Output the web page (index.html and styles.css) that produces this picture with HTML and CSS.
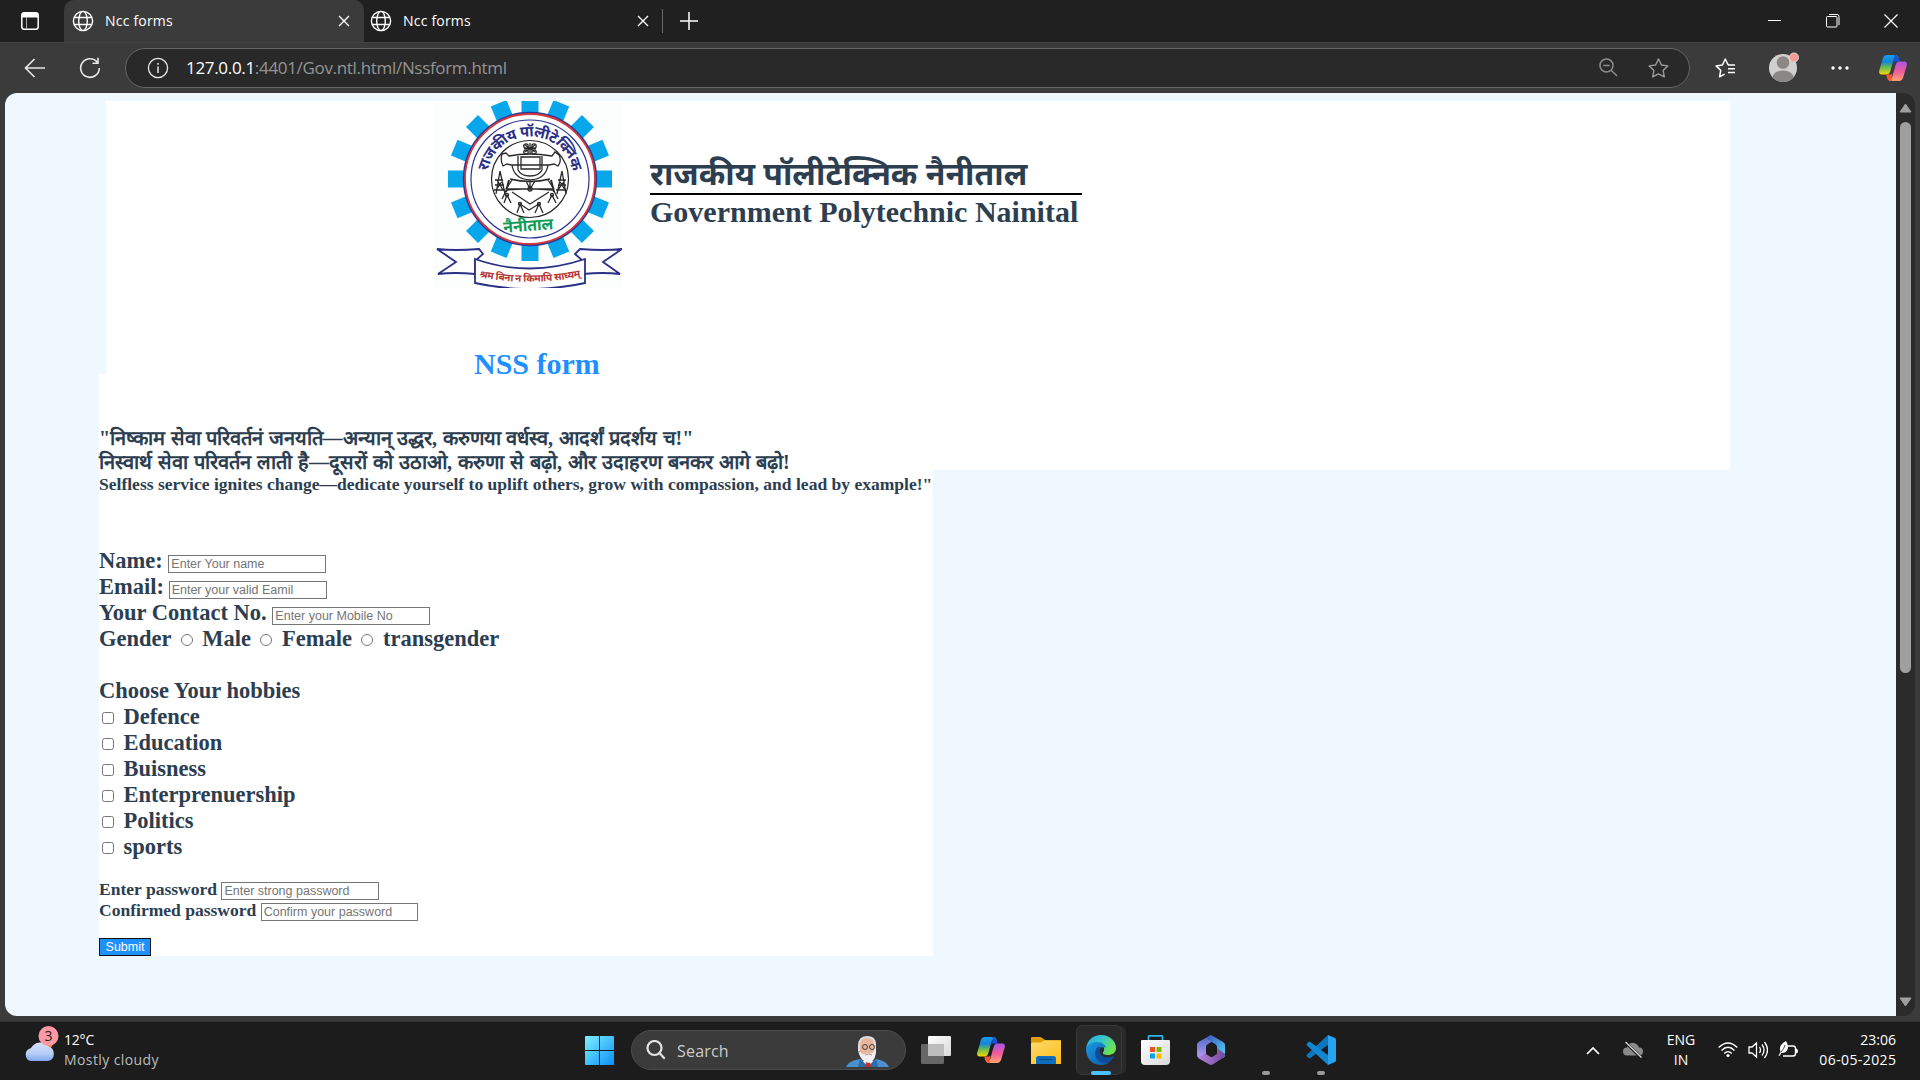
FILE: index.html
```html
<!DOCTYPE html>
<html lang="en">
<head>
<meta charset="utf-8">
<title>Ncc forms</title>
<link rel="stylesheet" href="styles.css">
</head>
<body>
<svg class="defs" width="0" height="0">
  <defs>
    <linearGradient id="cpA" x1="0" y1="0" x2="0" y2="1"><stop offset="0" stop-color="#1a9df0"/><stop offset=".35" stop-color="#1583d8"/><stop offset=".6" stop-color="#5cb85c"/><stop offset="1" stop-color="#f5d800"/></linearGradient>
    <linearGradient id="cpB" x1="0" y1="0" x2="0" y2="1"><stop offset="0" stop-color="#a855ea"/><stop offset=".5" stop-color="#ee5a9b"/><stop offset="1" stop-color="#ffa36b"/></linearGradient>
    <linearGradient id="win" x1="0" y1="0" x2="1" y2="1"><stop offset="0" stop-color="#7ff0ff"/><stop offset="1" stop-color="#0a90f8"/></linearGradient>
    <linearGradient id="cloud" x1="0" y1="0" x2="0" y2="1"><stop offset="0" stop-color="#d3e2fb"/><stop offset=".6" stop-color="#b6cdf6"/><stop offset="1" stop-color="#7ea6ec"/></linearGradient>
    <linearGradient id="fold" x1="0" y1="0" x2="1" y2="1"><stop offset="0" stop-color="#ffdb70"/><stop offset="1" stop-color="#fdbb15"/></linearGradient>
    <linearGradient id="edgeTop" x1="0" y1="0" x2="1" y2=".5"><stop offset="0" stop-color="#28a8dc"/><stop offset=".5" stop-color="#35c5cf"/><stop offset="1" stop-color="#6be34f"/></linearGradient>
    <linearGradient id="edgeLow" x1="0" y1="0" x2="1" y2="1"><stop offset="0" stop-color="#1b9ae4"/><stop offset="1" stop-color="#0c59a8"/></linearGradient>
    <linearGradient id="sheet" x1="0" y1="0" x2="1" y2="1"><stop offset="0" stop-color="#fff"/><stop offset="1" stop-color="#d8d8d8"/></linearGradient>
    <linearGradient id="mA" x1="0" y1="0" x2="0" y2="1"><stop offset="0" stop-color="#4a68c8"/><stop offset="1" stop-color="#b59af0"/></linearGradient>
    <linearGradient id="mB" x1="0" y1="0" x2="1" y2="1"><stop offset="0" stop-color="#3a56b8"/><stop offset="1" stop-color="#55d8fb"/></linearGradient>
    <linearGradient id="mC" x1="0" y1="0" x2="1" y2="0"><stop offset="0" stop-color="#b884dc"/><stop offset="1" stop-color="#70479c"/></linearGradient>
    <symbol id="globe" viewBox="0 0 22 22"><g fill="none" stroke="#fff" stroke-width="1.4"><circle cx="11" cy="11" r="9.6"/><ellipse cx="11" cy="11" rx="4.3" ry="9.6"/><path d="M2.2 7.5h17.6M2.2 14.5h17.6"/></g></symbol>
    <symbol id="cross" viewBox="0 0 12 12"><path d="M1 1l10 10M11 1L1 11" stroke="#fff" stroke-width="1.4" fill="none"/></symbol>
    <symbol id="copilot" viewBox="0 0 28 26">
      <path d="M16 0h-8C4.500 0 3.800 3 2.800 7L.4 15c-1 3.600.6 4.500 3 4.500h4c2.700 0 3.600-2 4.300-4.500L14.500 5c.6-2 1.300-2.600 3-2.600L20.500 6C19.600 1.500 18.500 0 16 0z" fill="url(#cpA)"/>
      <path d="M15 0c3.500 0 4.600 2.500 5.600 6.500h-3.800c-1.300 0-2 .3-2.600 1.500L15.500 3c.4-1.500-.2-2.600-.5-3z" fill="#1950d8"/>
      <path d="M12 26h8c3.500 0 4.200-3 5.200-7l2.400-8c1-3.600-.6-4.500-3-4.500h-4c-2.700 0-3.600 2-4.300 4.500L13.500 21c-.6 2-1.300 2.600-3 2.600L7.500 19.500C8.400 24.500 9.500 26 12 26z" fill="url(#cpB)"/>
      <path d="M13 26c-3.500 0-4.600-2.500-5.600-6.500h3.800c1.300 0 2-.3 2.600-1.500L12.500 23c-.4 1.500.2 2.600.5 3z" fill="#f4562f"/>
    </symbol>
  </defs>
</svg>

<header class="tabs">
  <svg class="ws" width="18" height="18" viewBox="0 0 18 18"><rect x=".8" y=".8" width="16.400" height="16.400" rx="2.500" fill="none" stroke="#fff" stroke-width="1.500"/><path d="M1 3a2 2 0 0 1 2-2h12a2 2 0 0 1 2 2v2.500H1z" fill="#fff"/><path d="M5.500 5v12" stroke="#aaa" stroke-width="1"/></svg>
  <div class="tab active"><svg width="22" height="22"><use href="#globe"/></svg><span class="ttl">Ncc forms</span><svg class="x" width="12" height="12"><use href="#cross"/></svg></div>
  <div class="tab"><svg width="22" height="22"><use href="#globe"/></svg><span class="ttl">Ncc forms</span><svg class="x" width="12" height="12"><use href="#cross"/></svg></div>
  <i class="sep"></i>
  <svg class="plus" width="18" height="18"><path d="M9 0v18M0 9h18" stroke="#fff" stroke-width="1.500"/></svg>
  <div class="winctl">
    <svg width="14" height="14"><path d="M0 6.500h13" stroke="#fff"/></svg>
    <svg width="14" height="14" fill="none" stroke="#fff"><rect x=".5" y="2.500" width="10.500" height="10.500" rx="1"/><path d="M3 .5h8q2 0 2 2v8.500" /></svg>
    <svg width="14" height="14"><path d="M.5.5l13 13M13.500.5l-13 13" stroke="#fff" stroke-width="1.200"/></svg>
  </div>
</header>

<nav class="toolbar">
  <svg class="back" width="22" height="20"><path d="M21 10H1.500M10.500 1L1.500 10l9 9" fill="none" stroke="#e8e8e8" stroke-width="1.600"/></svg>
  <svg class="reload" width="22" height="22"><path d="M18.500 5.500A9.300 9.300 0 1 0 20.300 11M19 .8v5.400h-5.500" fill="none" stroke="#e8e8e8" stroke-width="1.600"/></svg>
  <div class="address">
    <svg width="22" height="22"><circle cx="11" cy="11" r="9.600" fill="none" stroke="#e8e8e8" stroke-width="1.300"/><path d="M11 9.500V16M11 6v1.800" stroke="#e8e8e8" stroke-width="1.500"/></svg>
    <span class="url"><b>127.0.0.1</b>:4401/Gov.ntl.html/Nssform.html</span>
    <svg class="mag" width="19" height="19" fill="none" stroke="#8c8c8c" stroke-width="1.500"><circle cx="7.500" cy="7.500" r="6.500"/><path d="M12.200 12.200l5.800 5.800M4.200 7.500h6.600"/></svg>
    <svg class="star" width="21" height="20" viewBox="0 0 21 20"><path d="M10.500 1l2.900 6 6.400.9-4.700 4.500 1.200 6.500-5.800-3.100-5.800 3.100 1.200-6.500L1.200 7.900 7.600 7z" fill="none" stroke="#9a9a9a" stroke-width="1.400" stroke-linejoin="round"/></svg>
  </div>
  <svg class="favs" width="21" height="20" viewBox="0 0 21 20" fill="none" stroke="#fff" stroke-width="1.500" stroke-linejoin="round"><path d="M13.800 6.500h-.9L10.300 1l-2.900 6-6.300.9 4.600 4.500-1.100 6.400 5-2.600M13 7h7M13 10.800h7M13 14.600h7"/></svg>
  <svg class="avatar" width="32" height="32" viewBox="0 0 32 32"><clipPath id="av"><circle cx="15" cy="17" r="14"/></clipPath><circle cx="15" cy="17" r="14" fill="#d2d0ce"/><g clip-path="url(#av)" fill="#8a8785"><circle cx="15" cy="11.500" r="6.300"/><ellipse cx="15" cy="27.500" rx="11" ry="8"/></g><circle cx="26" cy="6.500" r="4.500" fill="#f99a94" stroke="#d8d6d4"/></svg>
  <svg class="dots" width="18" height="4" fill="#fff"><circle cx="2" cy="2" r="1.700"/><circle cx="9" cy="2" r="1.700"/><circle cx="16" cy="2" r="1.700"/></svg>
  <svg class="cp" width="28" height="26"><use href="#copilot"/></svg>
</nav>

<div class="viewport">
  <main class="page">
    <section class="banner">
      <div class="brand">
        <svg class="logo" width="188" height="187" viewBox="0 0 188 187">
          <rect width="188" height="187" fill="#fcfefe"/>
          <g stroke="#08a6ea" stroke-width="17">
            <path d="M96 -4V160M14 78H178"/>
            <path d="M96 -4V160M14 78H178" transform="rotate(22.500 96 78)"/>
            <path d="M96 -4V160M14 78H178" transform="rotate(45 96 78)"/>
            <path d="M96 -4V160M14 78H178" transform="rotate(67.500 96 78)"/>
          </g>
          <circle cx="96" cy="78" r="66" fill="#fff" stroke="#2d3b96" stroke-width="2.400"/>
          <circle cx="96" cy="78" r="65" fill="none" stroke="#d3383f" stroke-width="1.800"/>
          <circle cx="96" cy="78" r="59" fill="#fff" stroke="#2b3290" stroke-width="1.200"/>
          <circle cx="96" cy="78" r="38.500" fill="none" stroke="#222" stroke-width="1.200"/>
          <path id="arc" d="M53.500 71A43.200 43.200 0 0 1 138.500 71" fill="none"/>
          <text class="arc-text" fill="#2c2f86"><textPath href="#arc" startOffset="0" textLength="119">राजकीय पॉलीटेक्निक</textPath></text>
          <g fill="none" stroke="#2a2a2a" stroke-width="1.300">
            <path d="M68 53l4-1 3 3q20-4 43 0l3-4 4 3q3 6-1 11l-4-2-5 1H77l-4-1-4 2q-3-6-1-12zM87 56v12h19V56zM84 55v14M108 55v14M78 64q2 14 18 15 16-1 18-15M84 69q3 6 12 6t12-6"/>
            <path d="M96 42v11M91 44l10 7M101 44l-10 7M90 47.500h12"/><circle cx="92" cy="45" r="2.200"/><circle cx="100" cy="45" r="2.200"/><circle cx="92" cy="51" r="2.200"/><circle cx="100" cy="51" r="2.200"/>
            <path d="M76 78q20 5 40 0M72 88l6-9M120 88l-6-9M74 88h44M96 80v8M72 90l-4 8M120 90l4 8M78 91l18 12 19-12M92 80l4 8 5-8M73 89l15-1M103 88l16 1"/>
            <circle cx="96" cy="88" r="2"/><path d="M75 79l-3 12M117 79l3 12" stroke-width="2"/>
            <path d="M66 70l-4 23M66 70l5 23M61 79h8M61 84h9M60 89h11M63 79l6 10M69 79l-7 10M128 70l-5 23M128 70l4 23M124 79h8M124 84h8M122 89h10M125 79l6 10M131 79l-7 10"/>
            <path d="M73 94l-3 8M73 94l4 8M118 94l-4 8M118 94l4 8M83 112l3-9 4 9M101 112l4-9 4 9M86 103l9 6 10-6"/>
            <circle cx="73" cy="94" r="1.500"/><circle cx="118" cy="94" r="1.500"/><circle cx="86" cy="103" r="1.500"/><circle cx="105" cy="103" r="1.500"/>
          </g>
          <text class="city" x="94" y="130" text-anchor="middle" textLength="50" transform="rotate(-4 94 124)" fill="#0f9b54">नैनीताल</text>
          <path d="M3 148q18 2 42 0l4 5-8 7v13q-20-2-37 0l18-12zM188 148q-18 2-42 0l-5 5 8 7v13q20-2 37 0l-17-12z" fill="#fff" stroke="#2c2f86" stroke-width="1.800"/>
          <path d="M41 158q54 19 110 0v24q-55 12-110 0z" fill="#fff" stroke="#2c2f86" stroke-width="1.800"/>
          <path id="rib" d="M44 176q52 10 106-1" fill="none"/>
          <text class="motto" fill="#b83230"><textPath href="#rib" startOffset="1" textLength="102">श्रम बिना न किमापि साध्यम्</textPath></text>
        </svg>
        <div class="names">
          <div class="hi-name"><span>राजकीय पॉलीटेक्निक नैनीताल</span></div>
          <div class="en-name">Government Polytechnic Nainital</div>
        </div>
      </div>
      <h1>NSS form</h1>
    </section>
    <section class="quote">
      <div class="hi l1"><span>"निष्काम सेवा परिवर्तनं जनयति—अन्यान् उद्धर, करुणया वर्धस्व, आदर्शं प्रदर्शय च!"</span></div>
      <div class="hi l2"><span>निस्वार्थ सेवा परिवर्तन लाती है—दूसरों को उठाओ, करुणा से बढ़ो, और उदाहरण बनकर आगे बढ़ो!</span></div>
    </section>
    <form class="form">
      <div class="en">Selfless service ignites change—dedicate yourself to uplift others, grow with compassion, and lead by example!"</div>
      <div class="big">
        <div>Name: <input placeholder="Enter Your name"></div>
        <div>Email: <input class="mail" placeholder="Enter your valid Eamil"></div>
        <div>Your Contact No. <input placeholder="Enter your Mobile No"></div>
        <div>Gender <input type="radio"> Male <input type="radio"> Female <input type="radio"> transgender</div>
        <div class="hob">Choose Your hobbies</div>
        <div><input type="checkbox"> Defence</div>
        <div><input type="checkbox"> Education</div>
        <div><input type="checkbox"> Buisness</div>
        <div><input type="checkbox"> Enterprenuership</div>
        <div><input type="checkbox"> Politics</div>
        <div><input type="checkbox"> sports</div>
      </div>
      <div class="small">
        <div>Enter password <input placeholder="Enter strong password"></div>
        <div>Confirmed password <input class="conf" placeholder="Confirm your password"></div>
      </div>
      <button type="button">Submit</button>
    </form>
  </main>
  <aside class="scroll">
    <svg width="13" height="10"><path d="M6.500 1L12 9H1z" fill="#a0a0a0" stroke="#a0a0a0" stroke-linejoin="round"/></svg>
    <i class="thumb"></i>
    <svg width="13" height="10"><path d="M6.500 9L12 1H1z" fill="#a0a0a0" stroke="#a0a0a0" stroke-linejoin="round"/></svg>
  </aside>
</div>

<footer class="taskbar">
  <div class="weather">
    <svg width="36" height="38" viewBox="0 0 36 38"><circle cx="23" cy="18" r="6" fill="#f77f1d"/><path d="M7 36a6.500 6.500 0 0 1-1-12.500q.5-.5 1-.5a10.500 10.500 0 0 1 17.500-1.500A7.500 7.500 0 0 1 24 36z" fill="url(#cloud)"/><circle cx="24.500" cy="11" r="10" fill="#ff98a3"/><text class="badge" x="24.500" y="16" text-anchor="middle">3</text></svg>
    <div class="wt"><span class="t1">12°C</span><span class="t2">Mostly cloudy</span></div>
  </div>
  <svg class="start" width="29" height="29"><path d="M1 0h13v14H0V1q0-1 1-1zM15 0h13q1 0 1 1v13H15zM0 15h14v14H1q-1 0-1-1zM15 15h14v13q0 1-1 1H15z" fill="url(#win)"/></svg>
  <div class="search">
    <svg width="20" height="20"><circle cx="8.500" cy="8" r="7" fill="none" stroke="#e4e4e4" stroke-width="2.200"/><path d="M13.500 13l4.500 5" stroke="#ddd" stroke-width="2.400" stroke-linecap="round"/></svg>
    <span>Search</span>
    <svg class="face" width="43" height="33" viewBox="0 0 43 33">
      <path d="M0 32q2-6 14-8l8 5 8-5q11 2 13 8z" fill="#4a8fce"/><path d="M14 24l8 8 8-8 2 8H12z" fill="#2c6aa8"/><path d="M17 26l5 6 5-6z" fill="#fff"/><path d="M20 27h4l1 5h-6z" fill="#c3302b"/>
      <path d="M12 11Q12 1 21 1q10 0 9 11v4H12z" fill="#dcdde6"/><path d="M14 11q0-8 7-8t7 8v7q-2 7-7 7t-7-7z" fill="#e8b79b"/><path d="M12 15l2 2q3 4 7 1 5 2 8-3l1-2q1 12-7 15-9-1-11-13z" fill="#f1f1f4"/><path d="M19 20q4-2 7 0" stroke="#b9877a" fill="none"/>
      <g fill="none" stroke="#333" stroke-width=".9"><circle cx="19" cy="12" r="2.500"/><circle cx="26" cy="12" r="2.500"/></g>
    </svg>
  </div>
  <div class="apps">
    <div class="app"><svg width="30" height="28"><rect x="7" width="23" height="20" rx="1" fill="url(#sheet)"/><rect y="8" width="23" height="20" rx="1" fill="#777" opacity=".82"/><path d="M7 8h16v12H7z" fill="#bcbcbc"/></svg></div>
    <div class="app"><svg width="28" height="26"><use href="#copilot"/></svg></div>
    <div class="app"><svg width="30" height="27"><path d="M0 10V1q0-1 1-1h8q1.500 0 3 1.500L14 3h15q1 0 1 1v6z" fill="#dd9c05"/><path d="M0 7q0-1.500 1.500-1.500H10L13 3.500h17V27H0z" fill="url(#fold)"/><path d="M5 27v-5.500q0-2.500 2.500-2.500h15q2.500 0 2.500 2.500V27z" fill="#0e6fbe"/><path d="M9 22.500h12" stroke="#084c86" stroke-width="1.300" stroke-linecap="round"/></svg></div>
    <div class="app edge"><svg width="30" height="30" viewBox="0 0 30 30"><path d="M0 14C1 5 7 0 15 0c8.500 0 15 6 15 13 0 5-4 7-8 7-3 0-6-.8-5-2.500 3-4 0-8-6-8C6 9.500 1 11 0 14z" fill="url(#edgeTop)"/><path d="M0 14c1-4 5-7 11-7 5 0 9 3 9 6-3-3-10 1-8 8 2 5 7 8 12 6-2.500 2-5.500 3-9 3C6 30 0 23 0 14z" fill="url(#edgeLow)"/><path d="M10 14c-3 8 2 14 9 14 4 0 7-3 9-6 .5-.8-.3-1-1-.7-7 3-14 0-13-6 .3-2 1.500-3 1.500-3-2-.5-4.500-.5-5.500 1.700z" fill="#0b4f9c"/></svg></div>
    <div class="app"><svg width="29" height="30"><path d="M7.500 6V1.500Q7.500.8 8.500.8h12q1 0 1 .7V6" fill="none" stroke="#2bb4ec" stroke-width="1.700"/><path d="M1 5h27q1 0 1 1v20q0 4-4 4H4q-4 0-4-4V6q0-1 1-1z" fill="url(#sheet)"/><path d="M9 12h5v5H9z" fill="#f04e23"/><path d="M15.500 12h5v5h-5z" fill="#7fba00"/><path d="M9 18.500h5v5H9z" fill="#00a4ef"/><path d="M15.500 18.500h5v5h-5z" fill="#ffb900"/></svg></div>
    <div class="app"><svg width="28" height="30" viewBox="0 0 28 30"><path d="M14 0L1.500 7Q0 8 0 10v10q0 2 2 3l7-4V12q0-2 2-3l6-3.500z" fill="url(#mA)"/><path d="M14 0l12 7q2 1 2 3v10q0 2-2 3l-6-6v-5q0-2-2-3l-8-5 2-3q1-1 2-1z" fill="url(#mB)"/><path d="M1 23l8-4 4 2.500q1.500 1 3 0l4-2.500V13l8 6q0 3-2 4l-10 6.200q-2 1-4 0z" fill="url(#mC)"/></svg></div>
    <div class="app run"></div>
    <div class="app run"><svg width="30" height="30" viewBox="0 0 30 30"><path d="M22 0L1 19.500q-1 1 0 2L2.500 23q1 .8 2 0L23 9z" fill="#0a76bd"/><path d="M22 30L1 10.500q-1-1 0-2L2.500 7q1-.8 2 0L23 21z" fill="#1187d0"/><path d="M22 0l7 3q1 .5 1 1.500v21q0 1-1 1.500l-7 3z" fill="#27a3f0"/></svg></div>
  </div>
  <div class="tray">
    <svg class="chev" width="14" height="9"><path d="M1 8l6-6 6 6" fill="none" stroke="#fff" stroke-width="1.700"/></svg>
    <svg class="od" width="20" height="18"><path d="M4 14.500a4 4 0 0 1 0-8Q6 1 11 2q4 1 5 4.500a4 4 0 0 1 0 8z" fill="#8a8a8a"/><path d="M2.500 1.500l15.500 15" stroke="#1c1c1c" stroke-width="3"/><path d="M2.500 1l16 15.500" stroke="#ddd" stroke-width="1.300"/></svg>
    <div class="lang"><span>ENG</span><span>IN</span></div>
    <svg class="wifi" width="20" height="16" fill="none" stroke="#fff" stroke-width="1.400"><path d="M.7 5.500q9.300-9 18.600 0M3.500 8.500q6.500-6.300 13 0M6.200 11.500q3.800-3.800 7.600 0"/><circle cx="10" cy="13.500" r="1.600" fill="#fff" stroke="none"/></svg>
    <svg class="spk" width="20" height="18" fill="none" stroke="#fff" stroke-width="1.300"><path d="M1 6h3l4.500-4v14L4 12H1zM11.500 6q2 3 0 6M14 3.500q4 5.500 0 11M16.500 1q6 8 0 16"/></svg>
    <svg class="bat" width="21" height="18"><path d="M9.500 5H15q2.500 0 2.500 2.500v5q0 2.500-2.500 2.500H5" fill="none" stroke="#fff" stroke-width="1.400"/><path d="M18 7.500q2 0 2 2.500t-2 2.500z" fill="#fff"/><path d="M8 0q3 5 1.500 8.500Q8 12 3.500 12L1.500 15l-1-.6 2-3.400Q0 4 8 0z" fill="#fff"/><path d="M7 4Q6 8 3 11" stroke="#1c1c1c" stroke-width=".8" fill="none"/></svg>
    <div class="clock"><span>23:06</span><span class="date">06-05-2025</span></div>
  </div>
</footer>
</body>
</html>
```
FILE: styles.css
```css
* { box-sizing: border-box; }
body {
  margin: 0; width: 1920px; height: 1080px; overflow: hidden;
  display: flex; flex-direction: column; background: #3b3b3b; color: #fff;
  font-family: "Open Sans", "Noto Sans", sans-serif; font-size: 14px;
}
svg { display: block; flex: none; }
.defs { position: absolute; }

/* tab strip */
.tabs { height: 42px; background: #202020; display: flex; align-items: center; flex: none; }
.ws { margin: 0 25px 0 21px; }
.tab { width: 298px; height: 42px; display: flex; align-items: center; padding: 0 13px 1px 6px; }
.tab.active { width: 300px; background: #3b3b3b; border-radius: 10px 10px 0 0; padding-left: 8px; padding-right: 14px; }
.ttl { margin-left: 11px; letter-spacing: 0.2px; }
.tab .x { margin-left: auto; }
.sep { width: 1px; height: 24px; background: #666; }
.plus { margin-left: 17px; }
.winctl { margin-left: auto; display: flex; gap: 44px; padding-right: 22px; }

/* toolbar */
.toolbar { height: 51px; display: flex; align-items: center; flex: none; padding: 0 13px 1px 24px; border-top: 1px solid #424242; }
.reload { margin-left: 33px; }
.address { width: 1565px; height: 40px; margin-left: 24px; padding: 0 20px 0 21px; display: flex; align-items: center; border: 1px solid #666; border-radius: 20px; background: #292929; }
.url { margin-left: 17px; font-size: 17px; color: #949494; letter-spacing: -0.32px; white-space: nowrap; }
.url b { font-weight: 400; color: #fff; }
.mag { margin-left: auto; }
.star { margin-left: 30px; }
.favs { margin-left: 25px; }
.avatar { margin: -1px 0 0 32px; }
.dots { margin-left: 31px; }
.cp { margin-left: auto; }

/* page area */
.viewport { height: 923px; flex: none; margin: 0 5px; display: flex; border-radius: 12px; overflow: hidden; background: #2b2b2b; }
.page { width: 1891px; background: #f0f8ff; padding-top: 8px; color: #2c3e50; font-family: "Liberation Serif", serif; font-weight: bold; }
.banner { margin-left: 101px; width: 1624px; height: 273px; background: #fff; }
.brand { display: flex; padding-left: 328px; }
.names { margin: 51px 0 0 28px; width: 432px; }
.hi-name { height: 43px; padding-top: 4px; border-bottom: 2px solid #000; line-height: 43px; font-size: 32px; font-family: "Noto Sans Devanagari", "Noto Sans", sans-serif; white-space: nowrap; }
.hi-name span { display: inline-block; }
.en-name { font-size: 30px; line-height: 34px; white-space: nowrap; }
h1 { margin: 59px 0 0 368px; font-size: 30px; line-height: 34px; color: #1e90ff; }
.quote { margin-left: 94px; width: 1631px; height: 96px; background: #fff; padding-top: 52px; }
.hi { height: 24px; line-height: 24px; font-size: 20px; white-space: nowrap; }
.l1 { word-spacing: 0.500px; }
.l2 { word-spacing: 1px; }
.form { margin-left: 94px; width: 834px; height: 486px; background: #fff; padding-top: 4px; }
.en { font-size: 17.550px; line-height: 20px; height: 74px; white-space: nowrap; }
.big { font-size: 22.500px; height: 331px; }
.big div { height: 26px; line-height: 26px; white-space: nowrap; }
.big .hob { margin-top: 26px; }
input { font: 12.500px "Liberation Sans", sans-serif; width: 158px; height: 18px; margin: 0; padding: 1px 2px; border: 1px solid #767676; background: #fff; }
input::placeholder { color: #757575; }
.mail { margin-left: -1px; }
input[type="radio"], input[type="checkbox"] { width: 12px; height: 12px; padding: 0; }
input[type="radio"] { margin: 3px 4px 0 3.800px; }
input[type="checkbox"] { margin: 3px 3.500px 3px 3.400px; }
.small { font-size: 17.550px; height: 59px; }
.small div { height: 21px; line-height: 20px; }
.conf { width: 157px; }
button { display: block; width: 52px; height: 18px; padding: 0; font: 12.500px "Liberation Sans", sans-serif; line-height: 14px; color: #fff; background: #1e90ff; border: 1px solid #111; }

/* crest lettering */
.arc-text { font: bold 15px "Noto Sans Devanagari", "Noto Sans", sans-serif; }
.city { font: bold 16px "Noto Sans Devanagari", "Noto Sans", sans-serif; }
.motto { font: bold 10px "Noto Sans Devanagari", "Noto Sans", sans-serif; }

.scroll { flex: 1; display: flex; flex-direction: column; align-items: center; padding: 10px 0 9px; }
.thumb { width: 11px; height: 551px; margin: 9px 0 auto; border-radius: 6px; background: #9f9f9f; }

/* taskbar */
.taskbar { margin-top: 5px; height: 59px; background: #1c1c1c; border-top: 1px solid #333; display: flex; align-items: center; padding-bottom: 2px; }
.weather { display: flex; padding-left: 24px; width: 585px; }
.weather svg { margin-top: -6px; }
.badge { font-size: 14px; fill: #222; }
.wt { display: flex; flex-direction: column; margin-left: 4px; line-height: 20px; margin-top: -1px; }
.t1 { letter-spacing: -0.2px; }
.t2 { color: #bdbdbd; letter-spacing: 0.4px; }
.search { width: 275px; height: 40px; margin: 0 2px 0 17px; padding: 0 16px 0 14px; display: flex; align-items: center; border: 1px solid #4c4c4c; border-radius: 20px; background: #3b3b3b; font-size: 16px; color: #ccc; }
.search span { margin: 1px 0 0 11px; letter-spacing: 0.2px; }
.face { margin: 2px 0 0 auto; }
.apps { display: flex; }
.app { width: 55px; height: 50px; display: flex; align-items: center; justify-content: center; position: relative; }
.edge::before { content: ""; position: absolute; inset: 0 6px 0 3px; border: 1px solid #393939; border-radius: 6px; background: #2a2a2a; box-shadow: 5px 0 0 -1px #292929; }
.edge svg { position: relative; }
.edge::after, .run::after { content: ""; position: absolute; bottom: 0; left: 18px; width: 20px; height: 4px; border-radius: 2px; background: #4cc2ff; }
.run::after { left: 24px; width: 8px; background: #999; }
.tray { margin-left: auto; display: flex; align-items: center; padding-right: 24px; }
.od { margin-left: 23px; }
.lang, .clock { display: flex; flex-direction: column; line-height: 20px; margin-top: 0; }
.lang { align-items: center; width: 32px; margin-left: 22px; }
.wifi { margin-left: 21px; }
.spk { margin-left: 10px; }
.bat { margin-left: 10px; }
.clock { width: 97px; align-items: flex-end; }
.date { letter-spacing: 0.4px; margin-right: -0.4px; }
```
